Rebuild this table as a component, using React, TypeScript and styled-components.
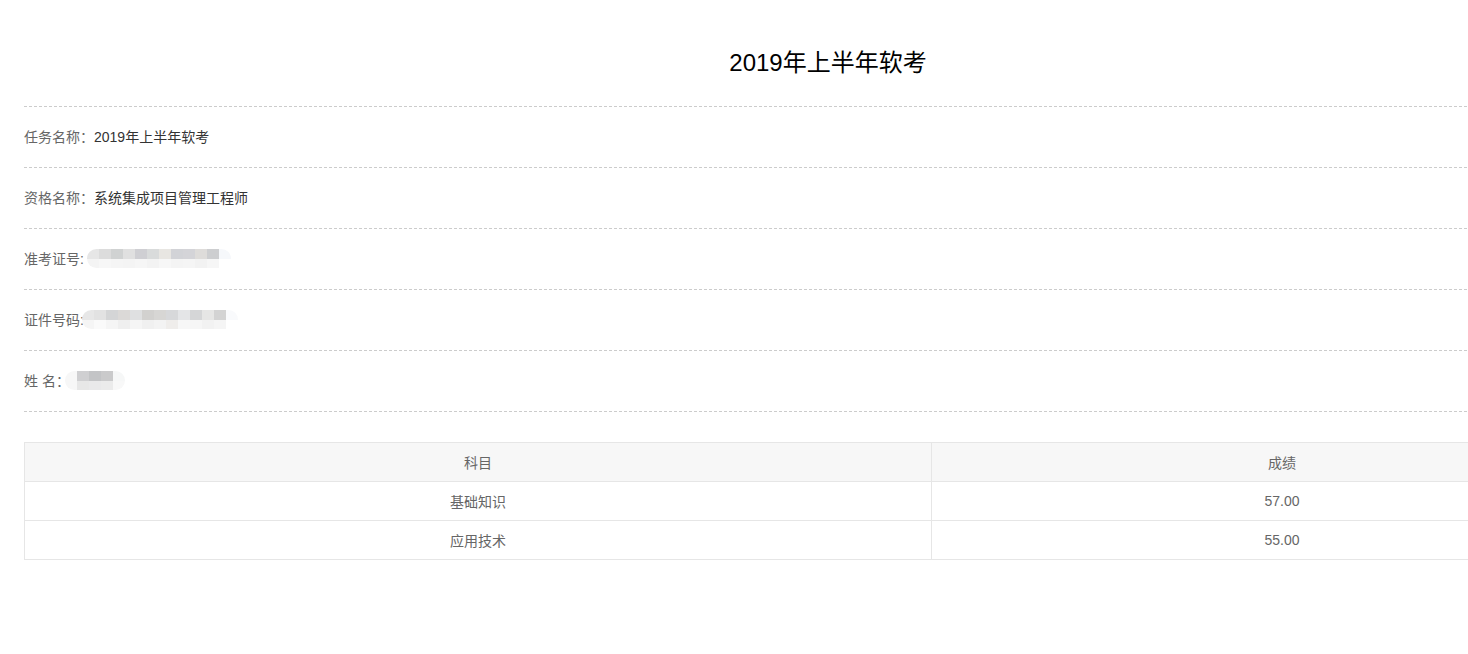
import styled, { createGlobalStyle } from "styled-components";

const GlobalStyle = createGlobalStyle`
  html, body {
    margin: 0;
    padding: 0;
    background: #ffffff;
    overflow: hidden;
  }
  body {
    font-family: "Liberation Sans", "Noto Sans CJK SC", sans-serif;
  }
`;

type Mask = { top: string[]; bottom: string[]; offset: number };

const infoRows: { label: string; value?: string; mask?: Mask }[] = [
  { label: "任务名称：", value: "2019年上半年软考" },
  { label: "资格名称：", value: "系统集成项目管理工程师" },
  {
    label: "准考证号:",
    mask: {
      offset: 3,
      top: ["#e6e6e6", "#dcdcdc", "#d0d2d2", "#e0e0e0", "#cfcfd3", "#d9dbdb", "#e8e6e2", "#d2d3d7", "#d4d4d8", "#dedcda", "#cdced0", "#f6f8fb"],
      bottom: ["#f4f4f4", "#f7f7f7", "#f5f5f5", "#f4f4f4", "#f6f6f6", "#f3f3f3", "#f7f7f7", "#f4f4f4", "#f5f5f5", "#f2f2f2", "#f6f6f6", "#ffffff"],
    },
  },
  {
    label: "证件号码:",
    mask: {
      offset: -2,
      top: ["#e7e7e7", "#e2e2e2", "#d4d5d6", "#dbd9d7", "#dfe0e1", "#d2d1cf", "#d7d6d4", "#d7d8da", "#e4e5e7", "#d5d6d7", "#e6e6e5", "#d3d3d3", "#f9fafc"],
      bottom: ["#f5f5f5", "#fafafa", "#f5f5f5", "#efefef", "#f5f5f5", "#f0f0f0", "#f3f3f3", "#efedeb", "#f7f7f7", "#f6f6f6", "#f2f2f2", "#f5f5f5", "#ffffff"],
    },
  },
  {
    label: "姓 名：",
    mask: {
      offset: -5,
      top: ["#f7f7f7", "#cfcfd1", "#c3c4c6", "#cacacb", "#f6f7f7"],
      bottom: ["#f7f7f7", "#e7e7e7", "#e9e9ea", "#ebebeb", "#f8f8f8"],
    },
  },
];

const scores = [
  { subject: "基础知识", score: "57.00" },
  { subject: "应用技术", score: "55.00" },
];

export default function App() {
  return (
    <>
      <GlobalStyle />
      <Page>
        <Title>2019年上半年软考</Title>
        {infoRows.map((row) => (
          <InfoRow key={row.label}>
            <Label>{row.label}</Label>
            {row.value && <Value>{row.value}</Value>}
            {row.mask && (
              <Mosaic $offset={row.mask.offset}>
                <MosaicLine>
                  {row.mask.top.map((c, i) => (
                    <Cell key={i} $color={c} $h={10} />
                  ))}
                </MosaicLine>
                <MosaicLine>
                  {row.mask.bottom.map((c, i) => (
                    <Cell key={i} $color={c} $h={9} />
                  ))}
                </MosaicLine>
              </Mosaic>
            )}
          </InfoRow>
        ))}

        <ScoreTable>
          <colgroup>
            <col style={{ width: "907px" }} />
            <col style={{ width: "701px" }} />
          </colgroup>
          <thead>
            <tr>
              <Th>科目</Th>
              <Th>成绩</Th>
            </tr>
          </thead>
          <tbody>
            {scores.map((s) => (
              <tr key={s.subject}>
                <Td>{s.subject}</Td>
                <Td>{s.score}</Td>
              </tr>
            ))}
          </tbody>
        </ScoreTable>
      </Page>
    </>
  );
}

const Page = styled.div`
  width: 1608px;
  margin-left: 24px;
  display: flex;
  flex-direction: column;
`;

const Title = styled.h1`
  margin: 0;
  padding-top: 48px;
  height: 58px;
  line-height: 30px;
  font-size: 24px;
  font-weight: 400;
  color: #000000;
  text-align: center;
  border-bottom: 1px dashed #cccccc;
`;

const InfoRow = styled.div`
  display: flex;
  align-items: center;
  height: 58px;
  padding-bottom: 2px;
  border-bottom: 1px dashed #cccccc;
  font-size: 14px;
`;

const Label = styled.span`
  color: #666666;
`;

const Value = styled.span`
  color: #333333;
`;

const Mosaic = styled.div<{ $offset: number }>`
  display: flex;
  flex-direction: column;
  margin-left: ${(p) => p.$offset}px;
  margin-top: 1px;
  border-radius: 10px;
  overflow: hidden;
`;

const MosaicLine = styled.div`
  display: flex;
`;

const Cell = styled.div<{ $color: string; $h: number }>`
  width: 12px;
  height: ${(p) => p.$h}px;
  background: ${(p) => p.$color};
`;

const ScoreTable = styled.table`
  margin-top: 30px;
  width: 1608px;
  table-layout: fixed;
  border-collapse: collapse;
  font-size: 14px;
  color: #666666;
`;

const Th = styled.th`
  height: 38px;
  padding: 0;
  font-weight: 400;
  background: #f7f7f7;
  border: 1px solid #e6e6e6;
  text-align: center;
`;

const Td = styled.td`
  height: 38px;
  padding: 0;
  border: 1px solid #e6e6e6;
  text-align: center;
`;
